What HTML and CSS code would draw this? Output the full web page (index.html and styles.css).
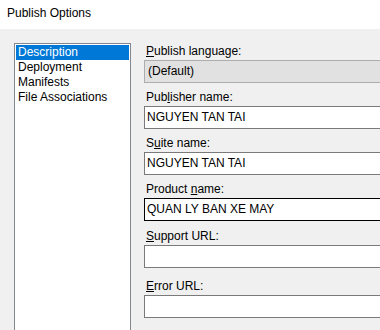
FILE: index.html
```html
<!DOCTYPE html>
<html lang="en">
<head>
    <meta charset="UTF-8">
    <title>Publish Options</title>
    <link rel="stylesheet" href="styles.css">
</head>
<body>
    <div class="titlebar">Publish Options</div>
    <div class="dialog">
        <ul class="nav-list">
            <li class="nav-item selected">Description</li>
            <li class="nav-item">Deployment</li>
            <li class="nav-item">Manifests</li>
            <li class="nav-item">File Associations</li>
        </ul>

        <div class="fields">
            <div class="field">
                <label><u>P</u>ublish language:</label>
                <div class="combo">(Default)</div>
            </div>
            <div class="field">
                <label>Pub<u>l</u>isher name:</label>
                <div class="textbox">NGUYEN TAN TAI</div>
            </div>
            <div class="field">
                <label>S<u>u</u>ite name:</label>
                <div class="textbox">NGUYEN TAN TAI</div>
            </div>
            <div class="field">
                <label>Product <u>n</u>ame:</label>
                <div class="textbox focused">QUAN LY BAN XE MAY</div>
            </div>
            <div class="field support">
                <label><u>S</u>upport URL:</label>
                <div class="textbox"></div>
            </div>
            <div class="field error">
                <label><u>E</u>rror URL:</label>
                <div class="textbox"></div>
            </div>
        </div>
    </div>
</body>
</html>
```

FILE: styles.css
```css
body {
    margin: 0;
    padding: 0;
    width: 380px;
    height: 330px;
    overflow: hidden;
    background: #f0f0f0;
    font-family: "Liberation Sans", Arial, sans-serif;
    font-size: 12px;
    color: #000;
}

.titlebar {
    height: 29px;
    line-height: 26px;
    padding-left: 7px;
    background: #fff;
}

.dialog {
    display: flex;
    gap: 13px;
    padding: 14px 0 0 14px;
    height: 287px;
    overflow: hidden;
}

.nav-list {
    list-style: none;
    margin: 0;
    padding: 1px;
    width: 113px;
    height: 300px;
    flex-shrink: 0;
    background: #fff;
    border: 1px solid #828790;
}

.nav-item { height: 15px; line-height: 15px; padding-left: 2px; white-space: nowrap; }
.nav-item.selected { background: #0078d7; color: #fff; }

.fields { display: flex; flex-direction: column; flex: 1; min-width: 0; overflow: hidden; }

.field { display: flex; flex-direction: column; gap: 1px; margin-bottom: 6px; }
.field.support { margin-top: 1px; margin-bottom: 10px; }

.field label { height: 16px; line-height: 16px; padding-left: 2px; white-space: nowrap; }

.combo, .textbox {
    box-sizing: border-box;
    height: 23px;
    line-height: 21px;
    padding-left: 2px;
    width: 250px;
    white-space: nowrap;
}

.combo { background: #e1e1e1; border: 1px solid #adadad; padding-left: 3px; }
.textbox { background: #fff; border: 1px solid #7a7a7a; }
.textbox.focused { border-color: #000; }
```
